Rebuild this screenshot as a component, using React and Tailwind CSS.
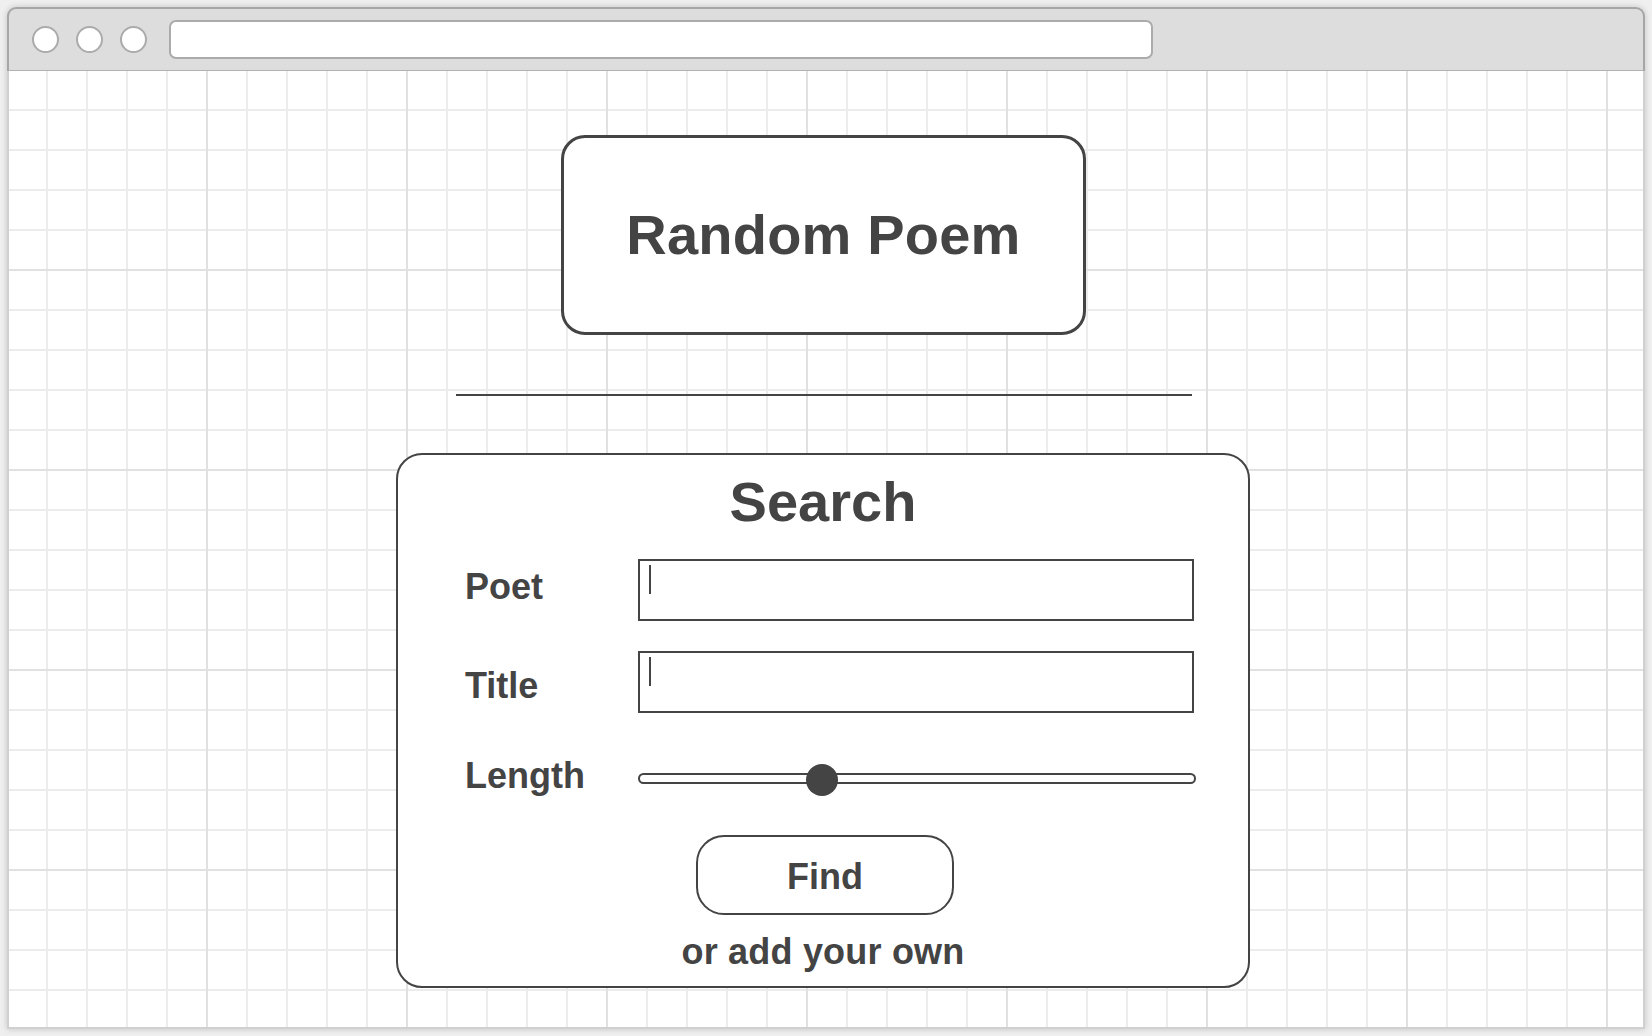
import React from "react";

function Circle() {
  return <div className="w-[27px] h-[27px] rounded-full border-2 border-[#ababab] bg-white shrink-0" />;
}

function Caret() {
  return <div className="mt-[4px] ml-[9px] w-[2px] h-[29px] bg-[#444444]" />;
}

export default function App() {
  return (
    <div className="w-[1652px] h-[1036px] bg-[#efefef] p-[7px] font-['Liberation_Sans',Arial,sans-serif] text-[#444444] font-bold">
      <div className="w-full h-full flex flex-col shadow-[0_0_6px_rgba(0,0,0,0.18)] rounded-t-[9px]">
        {/* title bar */}
        <div className="h-[64px] shrink-0 bg-[#dddddd] border-2 border-b border-[#a6a6a6] border-b-[#b2b2b2] rounded-t-[9px] flex items-center pl-[23px] gap-[17px]">
          <Circle />
          <Circle />
          <Circle />
          <div className="ml-[5px] w-[984px] h-[39px] rounded-[7px] border-2 border-[#ababab] bg-white" />
        </div>
        {/* canvas */}
        <div className="flex-1 border-x-2 border-b-2 border-[#d0d0d0] bg-white [background-image:linear-gradient(to_right,transparent_197px,#e1e1e1_197px,#e1e1e1_199px,transparent_199px),linear-gradient(to_bottom,transparent_198px,#e1e1e1_198px,#e1e1e1_200px),linear-gradient(to_right,transparent_37px,#ececec_37px,#ececec_39px,transparent_39px),linear-gradient(to_bottom,transparent_38px,#ececec_38px,#ececec_40px)] [background-size:200px_200px,200px_200px,40px_40px,40px_40px] flex flex-col items-start">
          {/* Random Poem */}
          <div className="mt-[64px] ml-[552px] w-[525px] h-[200px] border-[3px] border-[#444444] rounded-[24px] bg-white flex items-center justify-center">
            <span className="text-[56px] leading-[56px] tracking-[0.2px]">Random Poem</span>
          </div>
          {/* divider */}
          <div className="mt-[59px] ml-[447px] w-[736px] h-[2px] bg-[#444444]" />
          {/* Search box */}
          <div className="mt-[57px] ml-[387px] w-[854px] h-[535px] border-2 border-[#444444] rounded-[26px] bg-white flex flex-col">
            <div className="mt-[19px] h-[56px] text-[56px] leading-[56px] text-center">Search</div>
            <div className="mt-[29px] pl-[67px] flex items-start h-[62px]">
              <div className="w-[173px] mt-[10px] text-[36px] leading-[36px]">Poet</div>
              <div className="w-[556px] h-[62px] border-2 border-[#444444] bg-white">
                <Caret />
              </div>
            </div>
            <div className="mt-[30px] pl-[67px] flex items-start h-[62px]">
              <div className="w-[173px] mt-[17px] text-[36px] leading-[36px]">Title</div>
              <div className="w-[556px] h-[62px] border-2 border-[#444444] bg-white">
                <Caret />
              </div>
            </div>
            <div className="mt-[47px] pl-[67px] flex items-start h-[36px]">
              <div className="w-[173px] mt-[-2px] text-[36px] leading-[36px]">Length</div>
              <div className="relative w-[558px] h-[36px]">
                <div className="mt-[13px] h-[11px] rounded-full border-2 border-[#444444] bg-white" />
                <div className="absolute top-[4px] left-[168px] w-[32px] h-[32px] rounded-full bg-[#444444]" />
              </div>
            </div>
            <div className="mt-[39px] self-center ml-[4px] w-[258px] h-[80px] border-2 border-[#444444] rounded-[28px] flex items-center justify-center">
              <span className="pt-[3px] text-[36px] leading-[36px]">Find</span>
            </div>
            <div className="mt-[19px] text-center text-[36px] leading-[36px] tracking-[0.2px]">or add your own</div>
          </div>
        </div>
      </div>
    </div>
  );
}
